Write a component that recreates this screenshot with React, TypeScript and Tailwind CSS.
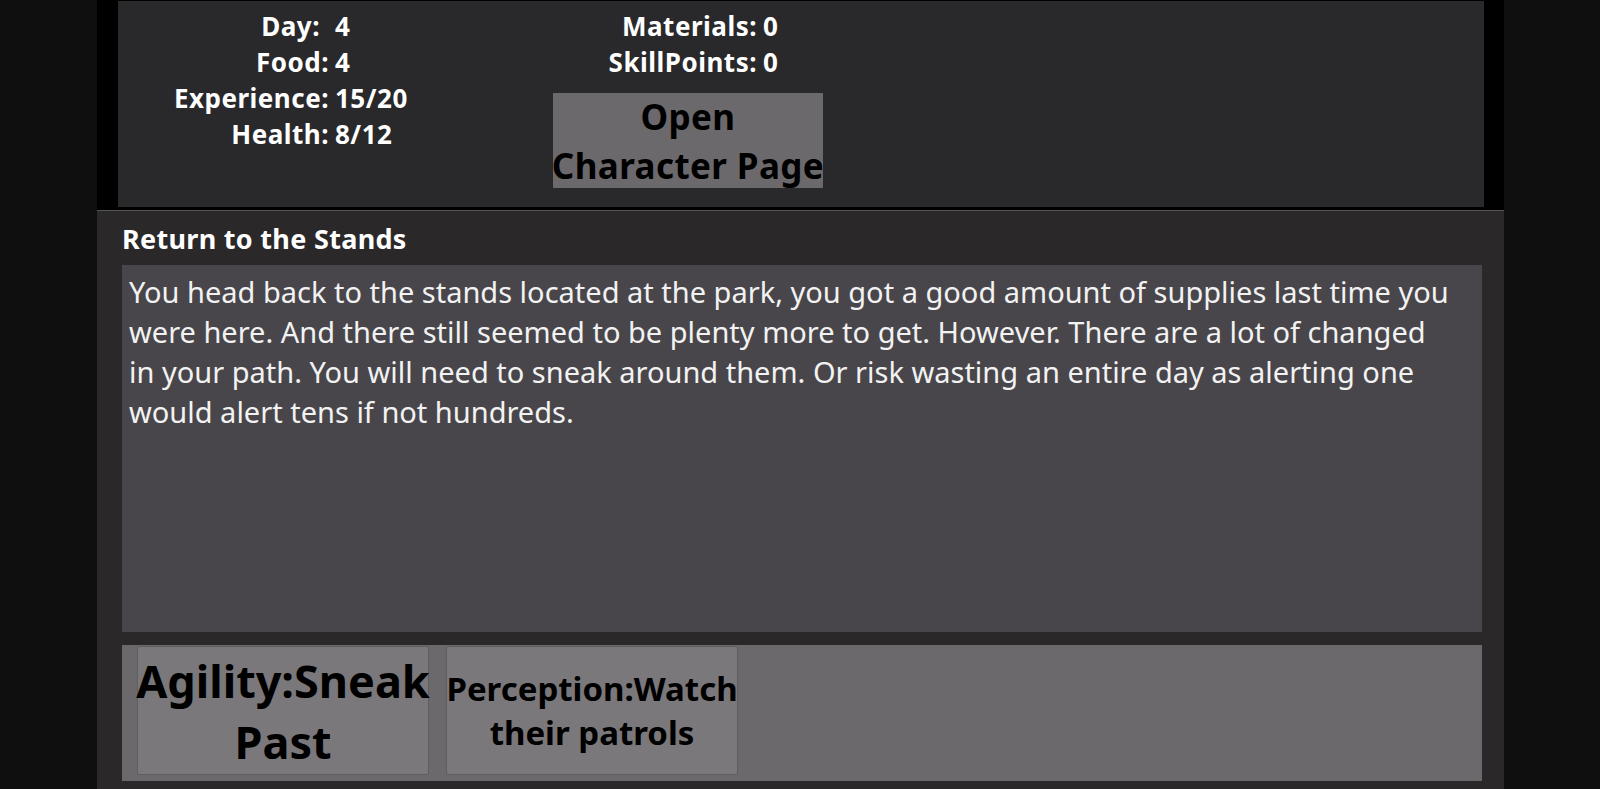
import React from "react";

const font = { fontFamily: '"Noto Sans", "Open Sans", sans-serif' };

export default function App() {
  return (
    <div className="w-[1600px] h-[789px] bg-[#0f0f0f] overflow-hidden" style={font}>
      <div className="ml-[97px] w-[1407px] h-[789px] flex flex-col">
        {/* Top band */}
        <div className="h-[210px] bg-black pl-[21px] pr-[20px] pt-[1px]">
          <div className="h-[206px] bg-[#29282a] flex pt-[7px] text-white font-bold text-[26px] leading-[36px] tracking-[0.5px]">
            <div className="ml-[31px] grid grid-cols-[180px_80px] gap-x-[6px] h-fit">
              <div className="text-right pr-[9px]">Day:</div>
              <div>4</div>
              <div className="text-right">Food:</div>
              <div>4</div>
              <div className="text-right">Experience:</div>
              <div>15/20</div>
              <div className="text-right">Health:</div>
              <div>8/12</div>
            </div>
            <div className="ml-[138px] flex flex-col w-[270px]">
              <div className="grid grid-cols-[204px_60px] gap-x-[6px]">
                <div className="text-right">Materials:</div>
                <div>0</div>
                <div className="text-right">SkillPoints:</div>
                <div>0</div>
              </div>
              <div className="mt-[13px] w-[270px] h-[95px] bg-[#6b696b] flex flex-col items-center justify-center text-black text-[35px] leading-[49px] tracking-[0.4px] whitespace-nowrap">
                <div>Open</div>
                <div>Character Page</div>
              </div>
            </div>
          </div>
        </div>
        {/* Lower section */}
        <div className="flex-1 bg-[#2a2829] border-t border-[#555456] pl-[25px] pr-[22px] flex flex-col">
          <div className="pt-[13px] text-[27px] leading-[30px] font-bold text-white tracking-[0.3px]">Return to the Stands</div>
          <div className="mt-[11px] h-[367px] bg-[#48464a] pl-[7px] pr-[24px] pt-[7px] text-[29px] leading-[40px] text-[#f2f2f2]">
            You head back to the stands located at the park, you got a good amount of supplies last time you were here. And there still seemed to be plenty more to get. However. There are a lot of changed in your path. You will need to sneak around them. Or risk wasting an entire day as alerting one would alert tens if not hundreds.
          </div>
          <div className="mt-[13px] h-[136px] bg-[#6b696b] pl-[15px] pt-[1px] flex gap-[17px]">
            <div className="w-[292px] h-[129px] bg-[#7a787a] border border-[#5f5d5f] rounded-[2px] flex flex-col items-center justify-center text-black font-bold text-[45px] leading-[61px] whitespace-nowrap overflow-visible">
              <div>Agility:Sneak</div>
              <div>Past</div>
            </div>
            <div className="w-[292px] h-[129px] bg-[#7a787a] border border-[#5f5d5f] rounded-[2px] flex flex-col items-center justify-center text-black font-bold text-[33px] leading-[44px] whitespace-nowrap">
              <div>Perception:Watch</div>
              <div>their patrols</div>
            </div>
          </div>
        </div>
      </div>
    </div>
  );
}
